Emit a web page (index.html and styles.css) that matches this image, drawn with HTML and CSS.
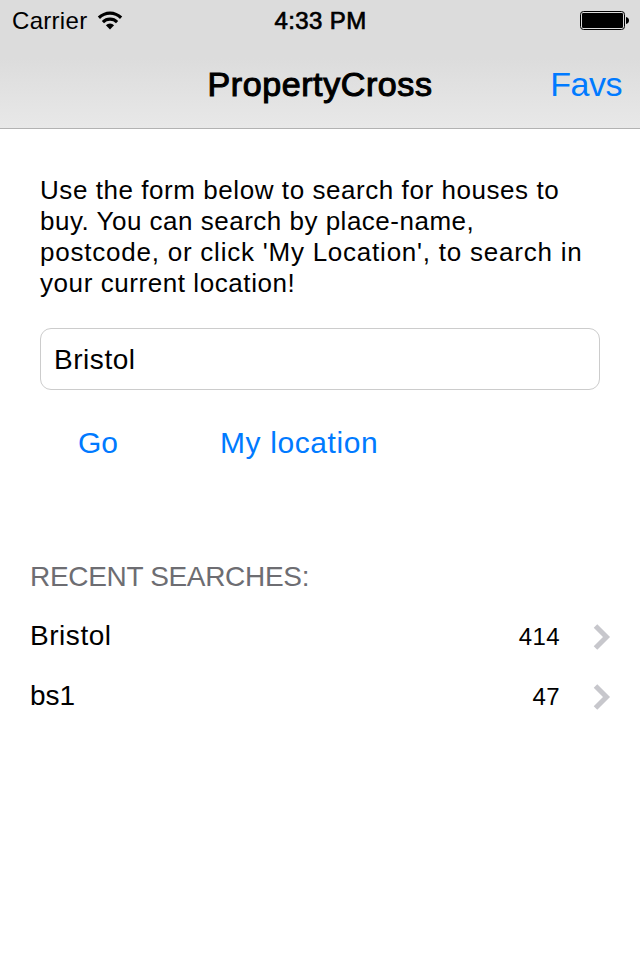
FILE: index.html
```html
<!DOCTYPE html>
<html lang="en">
<head>
<meta charset="utf-8">
<title>PropertyCross</title>
<link rel="stylesheet" href="styles.css">
</head>
<body>
<header class="top">
  <div class="status">
    <div class="carrier"><span>Carrier</span>
      <svg class="wifi" width="26" height="20" viewBox="0 0 26 20"><path d="M.8 5.6A17.4 17.4 0 0 1 25.2 5.6L23 7.9A14.2 14.2 0 0 0 3 7.9Z"/><path d="M4.8 9.9A11.6 11.6 0 0 1 21.2 9.9L19 12.2A8.5 8.5 0 0 0 7 12.2Z"/><path d="M8.9 14.2A5.8 5.8 0 0 1 17.1 14.2L13 18.6Z"/></svg>
    </div>
    <div class="time">4:33 PM</div>
    <svg class="battery" width="50" height="20" viewBox="0 0 50 20"><rect x=".5" y=".5" width="44" height="18" rx="3" fill="none" stroke="#000"/><rect x="2" y="2" width="41" height="15" rx="1.2"/><path d="M46 6q3 .6 3 3.5T46 13Z"/></svg>
  </div>
  <nav class="nav"><h1 class="title">PropertyCross</h1><a class="favs">Favs</a></nav>
</header>
<main>
  <p class="intro"><span class="l1">Use the form below to search for houses to</span><br><span class="l2">buy. You can search by place-name,</span><br><span class="l3">postcode, or click 'My Location', to search in</span><br><span class="l4">your current location!</span></p>
  <input class="field" type="text" value="Bristol">
  <div class="actions"><a class="go">Go</a><a class="loc">My location</a></div>
  <h2 class="heading">RECENT SEARCHES:</h2>
  <ul class="list">
    <li class="row"><span class="name">Bristol</span><span class="count">414</span><svg class="chev" width="18" height="26" viewBox="0 0 18 26"><path d="M2.5 2L13.5 13L2.5 24"/></svg></li>
    <li class="row"><span class="name bs">bs1</span><span class="count">47</span><svg class="chev" width="18" height="26" viewBox="0 0 18 26"><path d="M2.5 2L13.5 13L2.5 24"/></svg></li>
  </ul>
</main>
</body>
</html>
```
FILE: styles.css
```css
* { box-sizing: border-box; margin: 0; padding: 0; }
body {
  width: 640px; height: 960px; overflow: hidden;
  background: #fff; color: #000;
  font-family: "Liberation Sans", Arial, sans-serif;
}
a { color: #007aff; text-decoration: none; }
.top {
  height: 129px;
  background: linear-gradient(#dcdcdc 0, #dcdcdc 58px, #e8e8e8 128px);
  border-bottom: 1px solid #b2b2b2;
}
.status {
  display: grid; grid-template-columns: 1fr auto 1fr; align-items: start;
  height: 40px; padding: 7px 10px 0 12px;
  font-size: 24px; line-height: 28px;
}
.carrier { display: flex; letter-spacing: .3px; }
.wifi { margin: 3px 0 0 10px; height: 21px; padding-top: 1px; }
.time { -webkit-text-stroke: .7px #000; letter-spacing: .4px; margin-left: -1px; }
.battery { justify-self: end; margin-top: 4px; }
.nav {
  display: grid; grid-template-columns: 1fr auto 1fr; align-items: center;
  height: 88px; padding: 0 18px;
  font-size: 34px; line-height: 40px;
}
.title { grid-column: 2; font-size: 34px; font-weight: 400; -webkit-text-stroke: 1.1px #000; letter-spacing: .6px; }
.favs { justify-self: end; letter-spacing: -.5px; }
.intro { margin: 46px 40px 0; font-size: 26px; line-height: 31px; white-space: nowrap; letter-spacing: .5px; }
.l1 { letter-spacing: .56px; }
.l3 { letter-spacing: .77px; }
.l4 { letter-spacing: .57px; }
.field {
  display: block; width: 560px; height: 62px; margin: 29px 40px 0;
  padding: 2px 13px 0; border: 1px solid #ccc; border-radius: 11px;
  background: #fff; font: 28px "Liberation Sans", Arial, sans-serif; color: #000; outline: 0;
  letter-spacing: .55px;
}
.actions { display: flex; gap: 102px; padding-left: 78px; margin-top: 35px; font-size: 30px; line-height: 36px; }
.loc { letter-spacing: .6px; }
.heading { margin: 99px 0 0 30px; font-size: 28px; line-height: 34px; font-weight: 400; color: #6d6d72; letter-spacing: -.32px; }
.list { list-style: none; margin-top: 12px; }
.row { display: flex; align-items: center; height: 60px; padding: 0 29px 0 30px; font-size: 28px; }
.name { flex: 1; letter-spacing: .55px; }
.bs { letter-spacing: 0; }
.count { padding-top: 2px; font-size: 24px; letter-spacing: .4px; }
.chev { margin-left: 33px; fill: none; stroke: #c7c7cc; stroke-width: 5; position: relative; top: .5px; }
```
